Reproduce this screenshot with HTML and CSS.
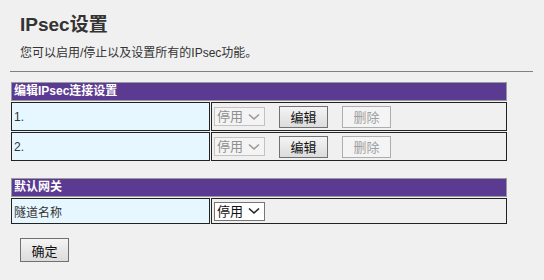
FILE: index.html
```html
<!DOCTYPE html>
<html lang="zh-CN">
<head>
<meta charset="utf-8">
<title>IPsec设置</title>
<link rel="stylesheet" href="styles.css">
</head>
<body>
<div class="page">
  <h1 class="title">IPsec设置</h1>
  <p class="desc">您可以启用/停止以及设置所有的IPsec功能。</p>
  <hr class="rule">

  <table class="grid">
    <tr><th colspan="2" class="head">编辑IPsec连接设置</th></tr>
    <tr class="row">
      <td class="name">1.</td>
      <td class="ctrl">
        <div class="ctrls">
          <select class="sel" disabled><option>停用</option></select>
          <button class="btn" type="button">编辑</button>
          <button class="btn" type="button" disabled>删除</button>
        </div>
      </td>
    </tr>
    <tr class="row">
      <td class="name">2.</td>
      <td class="ctrl">
        <div class="ctrls">
          <select class="sel" disabled><option>停用</option></select>
          <button class="btn" type="button">编辑</button>
          <button class="btn" type="button" disabled>删除</button>
        </div>
      </td>
    </tr>
  </table>

  <table class="grid grid2">
    <tr><th colspan="2" class="head">默认网关</th></tr>
    <tr class="row row-s">
      <td class="name">隧道名称</td>
      <td class="ctrl">
        <div class="ctrls">
          <select class="sel"><option>停用</option></select>
        </div>
      </td>
    </tr>
  </table>

  <div class="actions">
    <button class="btn btn-ok" type="button">确定</button>
  </div>
</div>
</body>
</html>
```

FILE: styles.css
```css
html, body {
  margin: 0;
  padding: 0;
  background: #f0f0f0;
}
body {
  font-family: "Liberation Sans", "Noto Sans CJK SC", sans-serif;
  font-size: 12px;
  color: #222;
}
.page {
  padding: 13px 10px 0 10px;
}
.title {
  margin: 0 0 0 10px;
  font-size: 19px;
  line-height: 24px;
  font-weight: bold;
  color: #333;
}
.desc {
  margin: 9px 0 0 10px;
  font-size: 12px;
  line-height: 14px;
  color: #333;
}
.rule {
  margin: 11px 1px 0 0;
  border: 0;
  border-top: 1px solid #808080;
  height: 0;
}
.grid {
  width: 498px;
  border-collapse: separate;
  border-spacing: 1px;
  margin-top: 9px;
}
.grid2 {
  margin-top: 15px;
}
.head {
  height: 17px;
  padding: 0 2px;
  background: #5b3a91;
  border: 1px solid #9a9a9a;
  color: #fff;
  font-size: 12px;
  font-weight: bold;
  text-align: left;
  line-height: 17px;
}
.row td {
  height: 27px;
  border: 1px solid #222;
  padding: 0 2px;
}
.row-s td {
  height: 24px;
}
.name {
  width: 193px;
  background: #e6f7ff;
  color: #333;
}
.ctrl {
  background: #f0f0f0;
}
.ctrls {
  display: flex;
  align-items: center;
  gap: 14px;
}
.sel {
  appearance: none;
  -webkit-appearance: none;
  width: 51px;
  height: 19px;
  margin: 0;
  padding: 0 0 0 2px;
  border: 1px solid #767676;
  background: #fff url("data:image/svg+xml;utf8,<svg xmlns='http://www.w3.org/2000/svg' width='12' height='8' viewBox='0 0 12 8'><path d='M1 1.5 L6 6 L11 1.5' fill='none' stroke='%23222' stroke-width='1.6'/></svg>") no-repeat right 4px center;
  font-family: "Liberation Sans", "Noto Sans CJK SC", sans-serif;
  font-size: 13px;
  line-height: 17px;
  color: #111;
  border-radius: 0;
}
.sel:disabled {
  border-color: #c3c3c3;
  background: #f4f4f4 url("data:image/svg+xml;utf8,<svg xmlns='http://www.w3.org/2000/svg' width='12' height='8' viewBox='0 0 12 8'><path d='M1 1.5 L6 6 L11 1.5' fill='none' stroke='%23999' stroke-width='1.6'/></svg>") no-repeat right 4px center;
  color: #8f8f8f;
  opacity: 1;
}
.btn {
  width: 49px;
  height: 22px;
  margin: 0;
  padding: 0;
  border: 1px solid #707070;
  border-radius: 0;
  background: linear-gradient(#f4f4f4, #dcdcdc);
  font-family: "Liberation Sans", "Noto Sans CJK SC", sans-serif;
  font-size: 13px;
  color: #111;
}
.btn:disabled {
  border-color: #adadad;
  background: #f4f4f4;
  color: #a0a0a0;
}
.actions {
  margin: 13px 0 0 10px;
}
.btn-ok {
  height: 24px;
}
```
